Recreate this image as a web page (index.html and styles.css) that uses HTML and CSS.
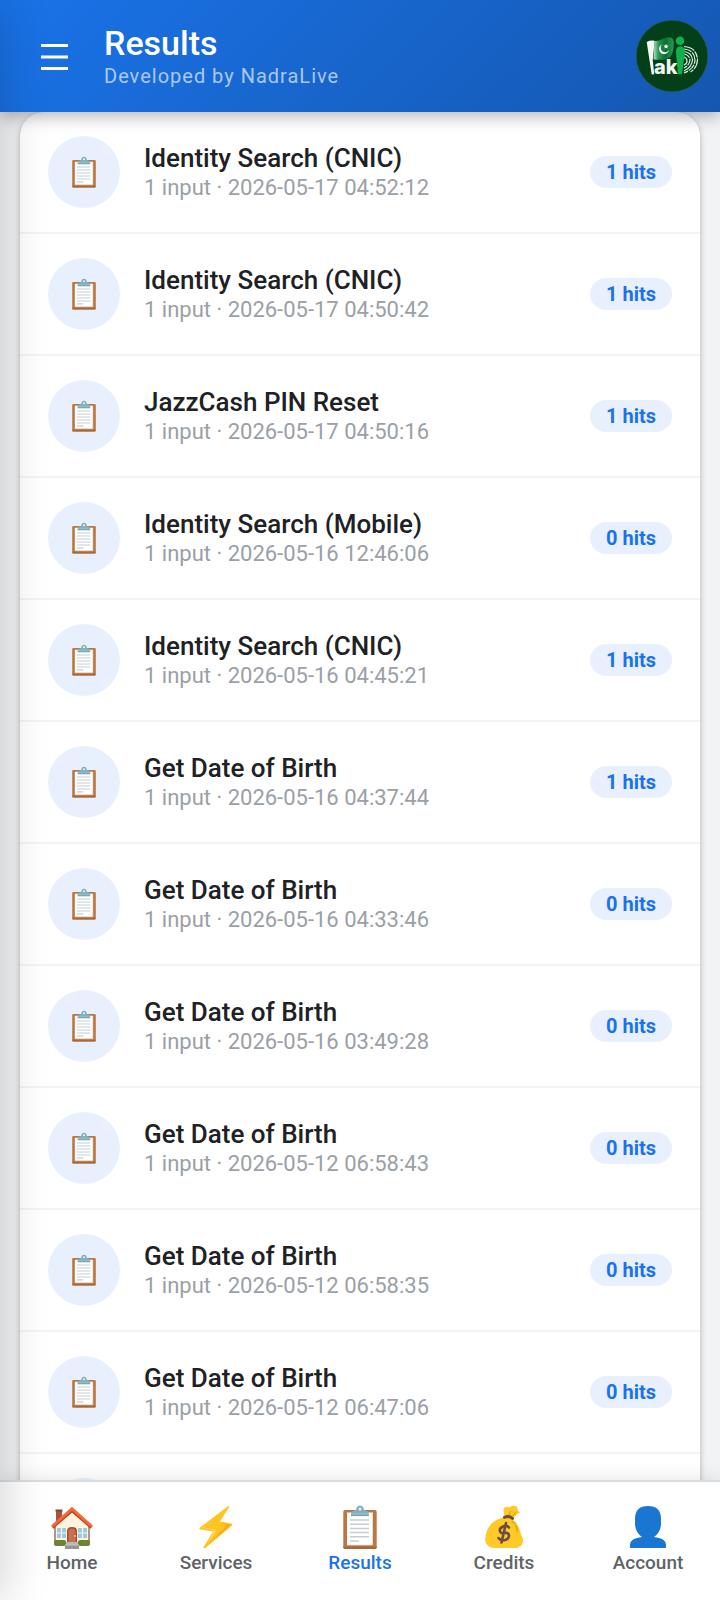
FILE: index.html
```html
<!DOCTYPE html>
<html lang="en">
<head>
<meta charset="utf-8">
<meta name="viewport" content="width=device-width, initial-scale=1">
<title>Results</title>
<link rel="stylesheet" href="styles.css">
</head>
<body>
<svg class="sprite" aria-hidden="true">
  <symbol id="clipboard" viewBox="0 0 34 44">
    <rect x=".3" y="5" width="33.4" height="39" rx="1.8" fill="#bc763f"/>
    <path d="M.3 41.5h33.4v.8a1.8 1.8 0 0 1-1.8 1.7H2.1a1.8 1.8 0 0 1-1.8-1.7z" fill="#a9683a"/>
    <path d="M4 7.500h25.500v32.500H4z" fill="#fff"/>
    <path d="M29.500 7.500v32.500H4" fill="none" stroke="#e2e6e8" stroke-width=".8"/>
    <path d="M7 15h19M7 19.200h19M7 23.400h19M7 27.600h19M7 31.800h19M7 36h9" stroke="#c5ced4" stroke-width="1.500"/>
    <path d="M8 10.800V8.500q0-2 3-3.100l2-.5Q13.600.4 17 .4t4 4.500l2 .5q2.800 1 2.800 3.100v2.300z" fill="#82aebd"/>
    <path d="M8.300 8.800h17.200" stroke="#9cc6d2"/>
    <circle cx="17" cy="4" r="1.500" fill="#e7f2f5"/>
    <path d="M8 10.600h17.800" stroke="#64929f" stroke-width=".8"/>
  </symbol>
  <symbol id="home" viewBox="0 0 44 44">
    <path d="M6 5h6v14H6z" fill="#a6533b"/><path d="M5.500 4.500h7v2h-7z" fill="#8d4032"/>
    <path d="M5 22 22 5l17 17v17H5z" fill="#fff3df"/>
    <path d="M5 22v15M39 22v15" stroke="#9c7166" stroke-width="1.500"/>
    <path d="M2.500 22.500 22 5.500l19.500 17" fill="none" stroke="#bf4520" stroke-width="3"/>
    <path d="M2 21.500 22 3.700l20 17.800" fill="none" stroke="#f4693b" stroke-width="2.800"/>
    <path d="M7 23h9v10H7zM28 23h9v10h-9z" fill="#9bcbd6"/>
    <path d="M11.500 23v10M7 28h9M32.500 23v10M28 28h9" stroke="#f2f6f2" stroke-width="1.200"/>
    <path d="M17 40V26q0-4 5-4t5 4v14z" fill="#a34b36"/>
    <path d="M18.500 38V27q0-3.500 3.500-3.500t3.500 3.500v11z" fill="#ca7052"/>
    <circle cx="25" cy="31" r="1" fill="#ffca28"/>
    <rect x="4" y="35" width="12" height="6" rx="2" fill="#6d8531"/><rect x="28" y="35" width="12" height="6" rx="2" fill="#6d8531"/>
    <path d="M16 37h12v3H16z" fill="#b8b8b8"/><path d="M15 40h14v4H15z" fill="#949494"/><path d="M15 40h14" stroke="#c7c7c7"/>
  </symbol>
  <symbol id="bolt" viewBox="0 0 44 44">
    <path d="M34 1.200 6 22.500q-1.400 1.600.5 2l12.500 2L9.700 42q-.7 2.200 1.300 1.200L38 20.500q1-1.500-.8-2l-11.200-2L35.200 2q.2-1.500-1.200-.8z" fill="#ffc421"/>
    <path d="M32 4.500 9 22.500l11.500 1.800 1.500 1.700-8.500 13 5.500-11.500 1-2.500L8 23z" fill="#ffdc65"/>
    <path d="M10.500 42.500 37 20l-10-2 6 2.500z" fill="#f5a916"/>
  </symbol>
  <symbol id="bag" viewBox="0 0 44 44">
    <path d="M23 12.500Q20.500 6 22.500 2.500q2.500-1.500 5 0 2.500-2.500 5-1.500 3 0 3 2-.5 2.500 2.500 4.500-3 1-5 4l-3 3z" fill="#ffc928"/>
    <path d="m26 11 3-5M30 12l4-5" stroke="#e9a20c" stroke-width="1.200"/>
    <path d="M22 12q5-1 9 3 6 4 7.500 13 3 6 2.500 9-2 6-8 6H11q-6-1-7.500-6Q2 27 10 18q5-4 12-6z" fill="#ffc928"/>
    <path d="M33 20q3 4 2 7M30 16l3 3" stroke="#e5a314" stroke-width="1.600" fill="none"/>
    <path d="M22.500 12.300q4.500-2 8 1.200" stroke="#6d4c41" stroke-width="3" fill="none" stroke-linecap="round"/>
    <path d="M27 22.500q-2-2.500-6-1-4 1.800-3 5 1 2.300 4.500 1.500 4.500-.6 4.500 2.500 0 3.500-4 4.500-4.500 1-6.500-2M24 18l-4.500 19.500" fill="none" stroke="#6d4c41" stroke-width="2.600" stroke-linecap="round"/>
  </symbol>
  <symbol id="person" viewBox="0 0 44 44">
    <path d="M22 1Q9 1 9 14v6q1 8 7 12-12 1-12 8v3h36v-3q0-7-12-8 6-4 7-12v-6Q35 1 22 1z" fill="#1976d2"/>
  </symbol>
</svg>

<header class="topbar">
  <button class="menu" type="button" aria-label="Open menu">
    <svg viewBox="0 0 28 28" aria-hidden="true"><path d="M1 3.500h27M1 15h27M1 26.500h27" stroke="#fff" stroke-width="3"/></svg>
  </button>
  <div class="heading">
    <h1 class="title">Results</h1>
    <p class="byline">Developed by NadraLive</p>
  </div>
  <svg class="logo" viewBox="0 0 72 72" role="img" aria-label="Pak ID">
    <defs>
      <linearGradient id="flag" x2="1"><stop stop-color="#b9dec3"/><stop offset=".25" stop-color="#2a9455"/><stop offset=".6" stop-color="#0b7036"/><stop offset="1" stop-color="#2b9a52"/></linearGradient>
    </defs>
    <circle cx="36" cy="36" r="35.700" fill="#03401a" stroke="#31572a" stroke-width=".6"/>
    <path d="M10.700 22q4-2 8-1.200l-2 19.200 1.500 14.300-2.500.2z" fill="#f3f8f3"/>
    <path d="M18.500 21q4 .5 8-2 5-3 9.500-1 2.500 2 1.500 10-1 8-5 10-4 2.500-15 1.500z" fill="url(#flag)"/>
    <path d="M26 24.500a5 5 0 1 0 7 5.500 4.500 4.500 0 1 1-7-5.500z" fill="#fff"/>
    <path d="m30 24 .8 1.500 1.700.2-1.200 1.200.3 1.700-1.600-.8-1.500.8.300-1.700-1.200-1.200 1.700-.2z" fill="#fff"/>
    <text class="logo-text" x="18" y="54">ak</text>
    <g fill="none" stroke="#d9ede0" stroke-width="1.200">
      <path d="M48 26.500q13 1 13.500 13.500-.5 8-7 12" stroke-dasharray="11 1 7 1"/>
      <path d="M48 29q10.500 1 11 11-.5 9-11 13" stroke-dasharray="8 1 12 1"/>
      <path d="M48 31.500q8 1 8.500 8.500-.5 7-8.500 11"/>
      <path d="M48 34q5.500 1 6 6-.5 5-6 8" stroke-dasharray="7 1"/>
      <path d="M48 37q3 1 3 4t-3 4"/>
    </g>
    <circle cx="44" cy="20.800" r="4.300" fill="#12b04c"/>
    <path d="M44.300 26.300q-4.500 0-4.300 6l1 11 1 11h4l1.500-12 1.500-9q.3-7-4.700-7z" fill="#12b04c"/>
  </svg>
</header>

<main class="content">
  <ul class="results">
    <li class="row"><span class="avatar"><svg aria-hidden="true"><use href="#clipboard"/></svg></span><div class="info"><h2 class="name">Identity Search (CNIC)</h2><p class="meta">1 input · 2026-05-17 04:52:12</p></div><span class="hits">1 hits</span></li>
    <li class="row"><span class="avatar"><svg aria-hidden="true"><use href="#clipboard"/></svg></span><div class="info"><h2 class="name">Identity Search (CNIC)</h2><p class="meta">1 input · 2026-05-17 04:50:42</p></div><span class="hits">1 hits</span></li>
    <li class="row"><span class="avatar"><svg aria-hidden="true"><use href="#clipboard"/></svg></span><div class="info"><h2 class="name">JazzCash PIN Reset</h2><p class="meta">1 input · 2026-05-17 04:50:16</p></div><span class="hits">1 hits</span></li>
    <li class="row"><span class="avatar"><svg aria-hidden="true"><use href="#clipboard"/></svg></span><div class="info"><h2 class="name">Identity Search (Mobile)</h2><p class="meta">1 input · 2026-05-16 12:46:06</p></div><span class="hits">0 hits</span></li>
    <li class="row"><span class="avatar"><svg aria-hidden="true"><use href="#clipboard"/></svg></span><div class="info"><h2 class="name">Identity Search (CNIC)</h2><p class="meta">1 input · 2026-05-16 04:45:21</p></div><span class="hits">1 hits</span></li>
    <li class="row"><span class="avatar"><svg aria-hidden="true"><use href="#clipboard"/></svg></span><div class="info"><h2 class="name">Get Date of Birth</h2><p class="meta">1 input · 2026-05-16 04:37:44</p></div><span class="hits">1 hits</span></li>
    <li class="row"><span class="avatar"><svg aria-hidden="true"><use href="#clipboard"/></svg></span><div class="info"><h2 class="name">Get Date of Birth</h2><p class="meta">1 input · 2026-05-16 04:33:46</p></div><span class="hits">0 hits</span></li>
    <li class="row"><span class="avatar"><svg aria-hidden="true"><use href="#clipboard"/></svg></span><div class="info"><h2 class="name">Get Date of Birth</h2><p class="meta">1 input · 2026-05-16 03:49:28</p></div><span class="hits">0 hits</span></li>
    <li class="row"><span class="avatar"><svg aria-hidden="true"><use href="#clipboard"/></svg></span><div class="info"><h2 class="name">Get Date of Birth</h2><p class="meta">1 input · 2026-05-12 06:58:43</p></div><span class="hits">0 hits</span></li>
    <li class="row"><span class="avatar"><svg aria-hidden="true"><use href="#clipboard"/></svg></span><div class="info"><h2 class="name">Get Date of Birth</h2><p class="meta">1 input · 2026-05-12 06:58:35</p></div><span class="hits">0 hits</span></li>
    <li class="row"><span class="avatar"><svg aria-hidden="true"><use href="#clipboard"/></svg></span><div class="info"><h2 class="name">Get Date of Birth</h2><p class="meta">1 input · 2026-05-12 06:47:06</p></div><span class="hits">0 hits</span></li>
    <li class="row"><span class="avatar"></span></li>
  </ul>
</main>

<nav class="tabs" aria-label="Main">
  <a class="tab" href="#"><svg aria-hidden="true"><use href="#home"/></svg><span>Home</span></a>
  <a class="tab" href="#"><svg aria-hidden="true"><use href="#bolt"/></svg><span>Services</span></a>
  <a class="tab tab-active" href="#" aria-current="page"><svg aria-hidden="true"><use href="#clipboard"/></svg><span>Results</span></a>
  <a class="tab" href="#"><svg aria-hidden="true"><use href="#bag"/></svg><span>Credits</span></a>
  <a class="tab" href="#"><svg aria-hidden="true"><use href="#person"/></svg><span>Account</span></a>
</nav>
<div class="drawer-edge" aria-hidden="true"></div>
</body>
</html>
```
FILE: styles.css
```css
* {
  box-sizing: border-box;
  margin: 0;
}

body {
  display: flex;
  flex-direction: column;
  height: 100vh;
  overflow: hidden;
  background: #f1f3f4;
  font-family: Roboto, "Liberation Sans", sans-serif;
}

.sprite {
  position: absolute;
  width: 0;
  height: 0;
}

.topbar {
  z-index: 2;
  display: flex;
  flex: none;
  align-items: center;
  gap: 20px;
  padding: 20px 12px 20px 24px;
  background: linear-gradient(135deg, #1a73e8, #1557b0);
  box-shadow: 0 4px 16px rgba(0, 0, 0, 0.3);
  color: #fff;
}

.menu {
  display: flex;
  align-items: center;
  justify-content: center;
  width: 60px;
  height: 60px;
  padding: 0;
  border: 0;
  background: none;
}

.menu svg {
  width: 28px;
  height: 28px;
}

.heading {
  display: grid;
  flex: 1;
  gap: 2px;
}

.title {
  font-size: 34px;
  font-weight: 500;
  line-height: 38px;
}

.byline {
  color: rgba(255, 255, 255, 0.65);
  font-size: 20px;
  letter-spacing: 1px;
  line-height: 24px;
}

.logo {
  width: 72px;
  height: 72px;
}

.logo-text {
  fill: #eef6ef;
  font: 800 20px Inter, Roboto, sans-serif;
}

.content {
  flex: 1;
  min-height: 0;
  padding: 0 20px;
  overflow: hidden;
}

.results {
  padding: 0;
  border-radius: 24px;
  background: #fff;
  box-shadow: 0 2px 6px rgba(0, 0, 0, 0.28);
  list-style: none;
}

.row {
  display: flex;
  align-items: center;
  gap: 24px;
  padding: 24px 28px;
  border-bottom: 2px solid #f1f3f4;
}

.avatar {
  display: flex;
  flex: none;
  align-items: center;
  justify-content: center;
  width: 72px;
  height: 72px;
  border-radius: 50%;
  background: #e8f0fe;
}

.avatar svg {
  width: 24px;
  height: 32px;
}

.info {
  flex: 1;
}

.name {
  color: #202124;
  font-size: 26px;
  font-weight: 500;
  line-height: 32px;
}

.meta {
  color: #9aa0a6;
  font-size: 22px;
  line-height: 28px;
}

.hits {
  padding: 4px 16px;
  border-radius: 16px;
  background: #e8f0fe;
  color: #1a73e8;
  font-size: 20px;
  font-weight: 700;
  line-height: 24px;
}

.tabs {
  z-index: 2;
  display: grid;
  flex: none;
  grid-template-columns: repeat(5, 1fr);
  padding: 23px 0 25px;
  border-top: 2px solid #dadce0;
  background: #fff;
  box-shadow: 0 -4px 16px rgba(0, 0, 0, 0.08);
}

.tab {
  display: flex;
  flex-direction: column;
  align-items: center;
  gap: 2px;
  color: #5f6368;
  font-size: 19px;
  font-weight: 500;
  line-height: 24px;
  text-decoration: none;
}

.tab svg {
  width: 44px;
  height: 44px;
}

.tab-active {
  color: #1a73e8;
}

/* Shadow cast by the closed side drawer */
.drawer-edge {
  position: fixed;
  z-index: 3;
  top: 0;
  bottom: 0;
  left: -300px;
  width: 300px;
  box-shadow: 8px 0 40px rgba(0, 0, 0, 0.15);
  pointer-events: none;
}
```
